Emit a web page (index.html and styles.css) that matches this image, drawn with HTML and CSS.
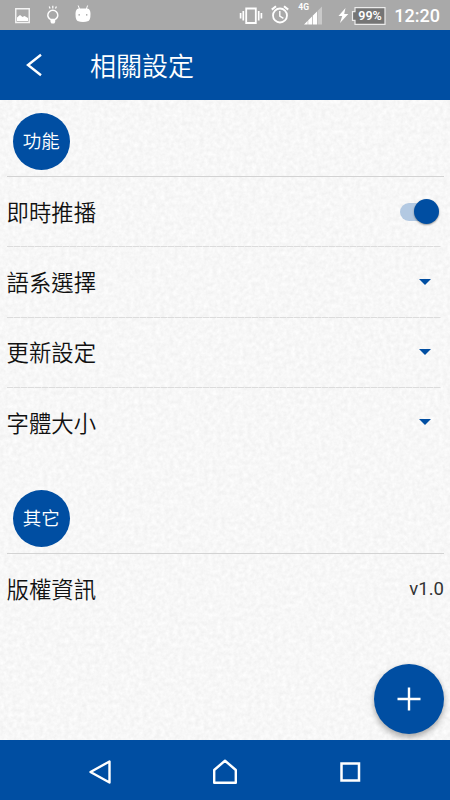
FILE: index.html
```html
<!DOCTYPE html>
<html lang="zh-Hant">
<head>
  <meta charset="UTF-8">
  <meta name="viewport" content="width=device-width, initial-scale=1">
  <title>相關設定</title>
  <link rel="stylesheet" href="styles.css">
</head>
<body>

<div class="phone">
  <div class="status-bar">
    <div class="status-left">
      <svg width="16" height="16" viewBox="0 0 16 16">
        <path d="M.75.75h13.5v13.8H.75z" fill="none" stroke="#f4f4f4" stroke-width="1.4"/>
        <path d="M2 12V9.500l3-2.500 2.500 2 2-1L13 10v3H2z" fill="#fff"/>
      </svg>
      <svg class="bulb" width="14" height="20" viewBox="0 0 14 20">
        <path d="M4.600 14.500C2.800 13.500 1.800 12 1.800 10.200a5 5 0 0 1 10 0c0 1.800-1 3.300-2.800 4.300z" fill="none" stroke="#fff" stroke-width="1.4"/>
        <path d="M4.500 14.500h4.700v2.600l-1 1.400H5.500l-1-1.400z" fill="#fff"/>
        <path d="M6.800.8v2.600M3.200 1.400l.9 2.200M10.400 1.400l-.9 2.200" stroke="#fff" stroke-width="1.2"/>
      </svg>
      <svg class="robot" width="16" height="18" viewBox="0 0 16 18">
        <path d="M3.200.5l1.500 4M12.600.5l-1.400 4" stroke="#fff" stroke-width="1"/>
        <path d="M3.500 3.500h9q3 .5 3 5.500 0 5.500-2 7-5.500 2-11 0-2-1.500-2-7 0-5 3-5.500z" fill="#fff"/>
        <path d="M3.500 9.200h1.400v1.400H3.500zM11 9.200h1.400v1.400H11z" fill="#999"/>
      </svg>
    </div>
    <div class="status-right">
      <svg width="24" height="18" viewBox="0 0 24 18">
        <path d="M7.200 1.500h9.600v14.500H7.200z" fill="none" stroke="#fff" stroke-width="1.8"/>
        <path d="M4.300 4v9.500M1.600 6v5.500M19.700 4v9.500M22.400 6v5.500" stroke="#fff" stroke-width="1.7"/>
      </svg>
      <svg class="alarm" width="18" height="19" viewBox="0 0 18 19">
        <circle cx="9" cy="10.500" r="7" fill="none" stroke="#fff" stroke-width="1.8"/>
        <path d="M.8 4.600L5 1.200M17.200 4.600L13 1.200" stroke="#fff" stroke-width="2"/>
        <path d="M8.800 6v5l3.600 2.300" fill="none" stroke="#fff" stroke-width="1.4"/>
      </svg>
      <div class="signal">
        <span class="network">4G</span>
        <svg width="20" height="19" viewBox="0 0 20 19">
          <path d="M14.500 5L19 .5V18.500h-4.500z" fill="#c9c9c9"/>
          <path d="M1 18.500l3.700-3.700v3.700zM5.200 14.300L9 10.500v8H5.200zM9.700 9.800L14 5.500v13H9.700z" fill="#fff"/>
        </svg>
      </div>
      <svg class="bolt" width="11" height="15" viewBox="0 0 11 15">
        <path d="M7.500 0L.5 8h3.700L2 15l8.300-9H6.200z" fill="#fff"/>
      </svg>
      <svg class="battery" width="35" height="18" viewBox="0 0 35 18">
        <path d="M4 .7h30v16.600H4v-4H1.500V4.700H4z" fill="#757575" stroke="#ececec" stroke-width="1.200"/>
        <text class="percent" x="19" y="13.300">99%</text>
      </svg>
      <span class="clock">12:20</span>
    </div>
  </div>

  <div class="header">
    <svg class="back" width="18" height="24" viewBox="0 0 18 24">
      <path d="M15 1.800L2 12l13 10.200" fill="none" stroke="#fff" stroke-width="2.4"/>
    </svg>
    <h1 class="title">相關設定</h1>
  </div>

  <div class="content">
    <svg class="paper" width="450" height="640">
      <filter id="grain" x="0" y="0" width="100%" height="100%" color-interpolation-filters="sRGB">
        <feTurbulence type="fractalNoise" baseFrequency="0.23" numOctaves="3" seed="4"/>
        <feColorMatrix values=".07 0 0 0 .934  .07 0 0 0 .934  .07 0 0 0 .934  0 0 0 0 1"/>
      </filter>
      <rect width="450" height="640" filter="url(#grain)"/>
    </svg>

    <div class="section">
      <div class="badge">功能</div>
      <div class="row">
        <span class="label">即時推播</span>
        <span class="switch"><span class="knob"></span></span>
      </div>
      <div class="row">
        <span class="label">語系選擇</span>
        <span class="arrow"></span>
      </div>
      <div class="row">
        <span class="label">更新設定</span>
        <span class="arrow"></span>
      </div>
      <div class="row">
        <span class="label">字體大小</span>
        <span class="arrow"></span>
      </div>
    </div>

    <div class="section other">
      <div class="badge">其它</div>
      <div class="row">
        <span class="label">版權資訊</span>
        <span class="version">v1.0</span>
      </div>
    </div>

    <div class="fab">
      <svg width="24" height="24" viewBox="0 0 24 24">
        <path d="M12 .5v23M.5 12h23" stroke="#fff" stroke-width="2.4"/>
      </svg>
    </div>
  </div>

  <div class="nav-bar">
    <svg width="26" height="28" viewBox="0 0 26 28">
      <path d="M22.500 3.500v21L3.500 14z" fill="none" stroke="#fff" stroke-width="2.4" stroke-linejoin="round"/>
    </svg>
    <svg width="26" height="28" viewBox="0 0 26 28">
      <path d="M2.200 12L13 2.700 23.800 12v12.700H2.200z" fill="none" stroke="#fff" stroke-width="2.4" stroke-linejoin="round"/>
    </svg>
    <svg width="26" height="28" viewBox="0 0 26 28">
      <path d="M4.500 5.500h17.500v17H4.500z" fill="none" stroke="#fff" stroke-width="2.5"/>
    </svg>
  </div>
</div>

</body>
</html>
```

FILE: styles.css
```css
* {
  box-sizing: border-box;
}

body {
  margin: 0;
  font-family: Roboto, "Noto Sans CJK TC", sans-serif;
}

svg {
  display: block;
  flex-shrink: 0;
}

.phone {
  display: flex;
  flex-direction: column;
  width: 450px;
  height: 800px;
  overflow: hidden;
}

.status-bar {
  display: flex;
  justify-content: space-between;
  height: 30px;
  padding: 1px 10px 0 15px;
  background-color: #a9a9a9;
  color: #fff;
}

.status-left,
.status-right {
  display: flex;
  align-items: center;
}

.bulb {
  margin: 0 0 1px 15px;
}

.robot {
  margin: 0 0 4px 15px;
}

.alarm {
  margin: 0 0 2px 8px;
}

.signal {
  display: flex;
  align-items: flex-end;
  height: 22px;
  margin: 0 0 3px 9px;
}

.network {
  align-self: flex-start;
  width: 5px;
  font-size: 8.5px;
  font-weight: 700;
  line-height: 8px;
}

.bolt {
  margin-left: 15px;
}

.battery {
  margin-left: 2px;
}

.percent {
  fill: #fff;
  font-size: 12.5px;
  font-weight: 600;
  text-anchor: middle;
}

.clock {
  margin-left: 8px;
  font-size: 18px;
  font-weight: 500;
}

.header {
  display: flex;
  align-items: center;
  height: 70px;
  padding-left: 26px;
  background-color: #004ea2;
  color: #fff;
}

.title {
  margin: 3px 0 0 46px;
  font-size: 26px;
  font-weight: 350;
  line-height: 38px;
}

.content {
  position: relative;
  flex: 1;
  padding: 12.5px 6px 0 7px;
  background-color: #f7f7f7;
}

.paper {
  position: absolute;
  top: 0;
  left: 0;
}

.section {
  position: relative;
}

.other {
  margin-top: 32px;
}

.badge {
  width: 57.5px;
  height: 57.5px;
  margin: 0 0 6px 5.5px;
  border-radius: 50%;
  background-color: #004ea2;
  color: #fff;
  font-size: 18.5px;
  font-weight: 350;
  line-height: 58px;
  text-align: center;
}

.row {
  display: flex;
  align-items: center;
  justify-content: space-between;
  height: 70.4px;
  background: repeating-linear-gradient(90deg, #dcdcdc 0 6px, #ebebeb 6px 7px) no-repeat 0 0 / 434px 1px;
}

.badge + .row {
  background: linear-gradient(#d3d3d3, #d3d3d3) no-repeat 0 0 / 100% 1px;
}

.label {
  margin: -1px 0 0 -.5px;
  color: #111;
  font-size: 22.4px;
  font-weight: 350;
}

.switch {
  width: 38px;
  height: 18px;
  margin: 1px 6px 0 0;
  border-radius: 9px;
  background-color: #b3c9e2;
}

.knob {
  display: block;
  width: 25px;
  height: 25px;
  margin: -4px 0 0 14px;
  border-radius: 50%;
  background-color: #004ea2;
  box-shadow: 0 1px 2px rgba(0,0,0,0.4);
}

.arrow {
  margin-right: 13px;
  border: 6px solid transparent;
  border-top-color: #004ea2;
  border-bottom: 0;
}

.version {
  margin-top: 2px;
  color: #333;
  font-size: 18.5px;
}

.fab {
  position: absolute;
  right: 6px;
  bottom: 6px;
  display: flex;
  align-items: center;
  justify-content: center;
  width: 70px;
  height: 70px;
  border-radius: 50%;
  background-color: #004ea2;
  box-shadow: 0 3px 6px rgba(0,0,0,0.35);
}

.nav-bar {
  position: relative;
  display: flex;
  align-items: center;
  justify-content: center;
  gap: 99px;
  height: 60px;
  padding-top: 3px;
  background-color: #004ea2;
}
```
